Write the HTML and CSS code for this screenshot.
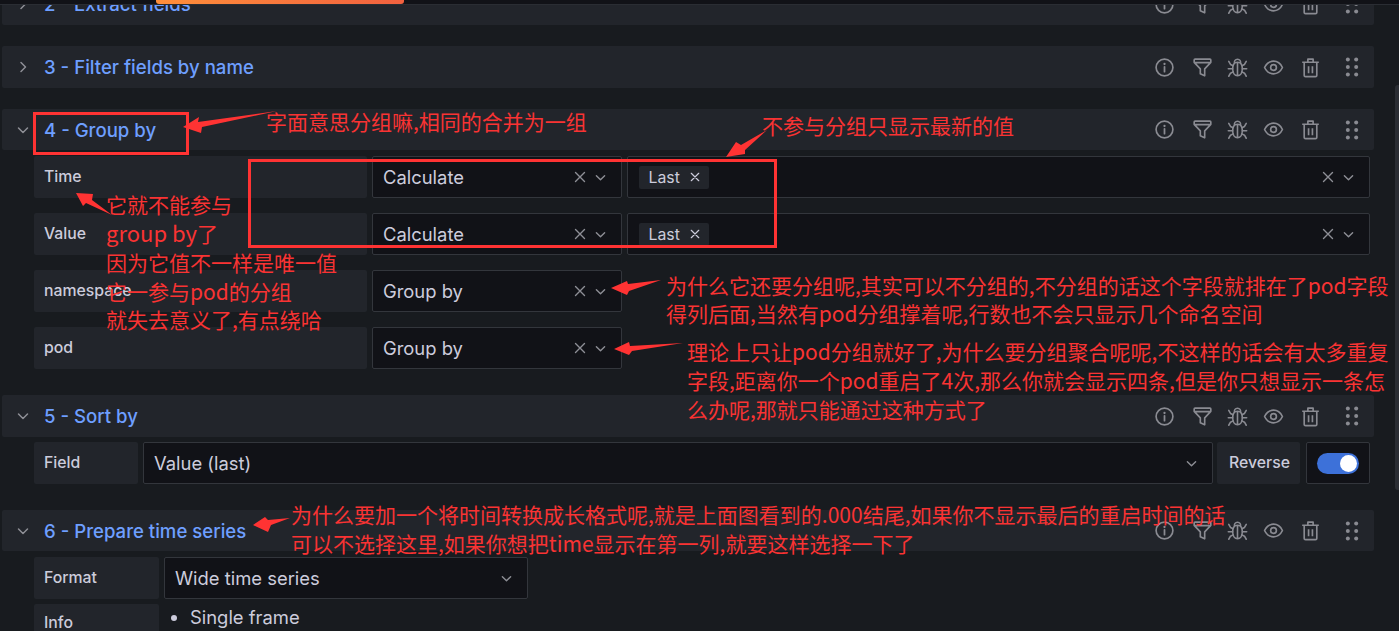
FILE: index.html
```html
<!DOCTYPE html>
<html lang="zh-CN">
<head>
<meta charset="utf-8">
<title>Transformations</title>
<link rel="stylesheet" href="styles.css">
</head>
<body>
<svg class="sprite" width="0" height="0" aria-hidden="true">
  <symbol id="i-info" viewBox="0 0 24 24"><circle cx="12" cy="12" r="9.6" fill="none" stroke="currentColor" stroke-width="1.9"/><circle cx="12" cy="8" r="1.3" fill="currentColor"/><path d="M12 11.2v5.6" stroke="currentColor" stroke-width="2" stroke-linecap="round"/></symbol>
  <symbol id="i-filter" viewBox="0 0 24 24"><path d="M3.5 2.500h17a1 1 0 0 1 1 1v2.600L14.500 13.500v8l-5-2.400v-5.600L2.500 6.100V3.500a1 1 0 0 1 1-1zM3 6.500h18" fill="none" stroke="currentColor" stroke-width="1.900" stroke-linejoin="round"/></symbol>
  <symbol id="i-bug" viewBox="0 0 24 24"><g fill="none" stroke="currentColor" stroke-width="1.800" stroke-linecap="round" stroke-linejoin="round"><path d="M12 6c3.300 0 5.500 3 5.500 7.500S15.300 21.500 12 21.500 6.500 18 6.500 13.500 8.700 6 12 6zM12 6.500v15M8.500 7.500C8 4.500 9.500 2.500 12 2.500s4 2 3.500 5"/><path d="M2 5l2 3.500 3 1.500M22 5l-2 3.500-3 1.500M1.500 13.500H6.500M22.500 13.500h-5M2 22l2-3.500 3-1.500M22 22l-2-3.500-3-1.500"/></g></symbol>
  <symbol id="i-eye" viewBox="0 0 24 24"><path d="M1.800 12C4 7.300 7.800 4.800 12 4.800s8 2.500 10.200 7.200c-2.200 4.700-6 7.200-10.200 7.200S4 16.700 1.800 12z" fill="none" stroke="currentColor" stroke-width="1.900" stroke-linejoin="round"/><circle cx="12" cy="12" r="3.300" fill="none" stroke="currentColor" stroke-width="1.900"/></symbol>
  <symbol id="i-trash" viewBox="0 0 24 24"><path d="M2.500 6h19M9 6V2.500h6V6M4.800 6v15a1.500 1.500 0 0 0 1.500 1.500h11.400a1.500 1.500 0 0 0 1.500-1.500V6M9.800 10.500v8M14.200 10.500v8" fill="none" stroke="currentColor" stroke-width="1.900" stroke-linejoin="round"/></symbol>
  <symbol id="i-drag" viewBox="0 0 24 24"><g fill="currentColor"><circle cx="7" cy="3" r="2.400"/><circle cx="17" cy="3" r="2.400"/><circle cx="7" cy="12" r="2.400"/><circle cx="17" cy="12" r="2.400"/><circle cx="7" cy="21" r="2.400"/><circle cx="17" cy="21" r="2.400"/></g></symbol>
  <symbol id="i-down" viewBox="0 0 12 12"><path d="M1.500 4l4.500 4.500L10.500 4" fill="none" stroke="currentColor" stroke-width="1.500" stroke-linecap="round" stroke-linejoin="round"/></symbol>
  <symbol id="i-right" viewBox="0 0 12 12"><path d="M4 1.500L8.500 6 4 10.500" fill="none" stroke="currentColor" stroke-width="1.500" stroke-linecap="round" stroke-linejoin="round"/></symbol>
  <symbol id="i-x" viewBox="0 0 12 12"><path d="M1.500 1.500l9 9M10.500 1.500l-9 9" fill="none" stroke="currentColor" stroke-width="1.400" stroke-linecap="round"/></symbol>
</svg>

<div class="page">
  <div class="topbar"><div class="progress"></div></div>
  <div class="scrollbar"></div>

  <main class="list">
    <section class="block block-first">
      <header class="head">
        <svg class="chev"><use href="#i-right"/></svg>
        <h2 class="title">2 - Extract fields</h2>
        <div class="actions">
          <svg class="ico"><use href="#i-info"/></svg><svg class="ico"><use href="#i-filter"/></svg><svg class="ico"><use href="#i-bug"/></svg><svg class="ico"><use href="#i-eye"/></svg><svg class="ico"><use href="#i-trash"/></svg><svg class="ico ico-drag"><use href="#i-drag"/></svg>
        </div>
      </header>
    </section>

    <section class="block">
      <header class="head">
        <svg class="chev"><use href="#i-right"/></svg>
        <h2 class="title">3 - Filter fields by name</h2>
        <div class="actions">
          <svg class="ico"><use href="#i-info"/></svg><svg class="ico"><use href="#i-filter"/></svg><svg class="ico"><use href="#i-bug"/></svg><svg class="ico"><use href="#i-eye"/></svg><svg class="ico"><use href="#i-trash"/></svg><svg class="ico ico-drag"><use href="#i-drag"/></svg>
        </div>
      </header>
    </section>

    <section class="block">
      <header class="head head-tight">
        <svg class="chev"><use href="#i-down"/></svg>
        <h2 class="title">4 - Group by</h2>
        <div class="actions">
          <svg class="ico"><use href="#i-info"/></svg><svg class="ico"><use href="#i-filter"/></svg><svg class="ico"><use href="#i-bug"/></svg><svg class="ico"><use href="#i-eye"/></svg><svg class="ico"><use href="#i-trash"/></svg><svg class="ico ico-drag"><use href="#i-drag"/></svg>
        </div>
      </header>
      <div class="body body-group">
        <div class="row">
          <div class="label label-field">Time</div>
          <div class="select select-mode"><span class="value">Calculate</span><svg class="x"><use href="#i-x"/></svg><svg class="caret"><use href="#i-down"/></svg></div>
          <div class="select select-calc"><span class="tag">Last<svg class="tag-x"><use href="#i-x"/></svg></span><svg class="x"><use href="#i-x"/></svg><svg class="caret"><use href="#i-down"/></svg></div>
        </div>
        <div class="row">
          <div class="label label-field">Value</div>
          <div class="select select-mode"><span class="value">Calculate</span><svg class="x"><use href="#i-x"/></svg><svg class="caret"><use href="#i-down"/></svg></div>
          <div class="select select-calc"><span class="tag">Last<svg class="tag-x"><use href="#i-x"/></svg></span><svg class="x"><use href="#i-x"/></svg><svg class="caret"><use href="#i-down"/></svg></div>
        </div>
        <div class="row">
          <div class="label label-field">namespace</div>
          <div class="select select-mode"><span class="value">Group by</span><svg class="x"><use href="#i-x"/></svg><svg class="caret"><use href="#i-down"/></svg></div>
        </div>
        <div class="row">
          <div class="label label-field">pod</div>
          <div class="select select-mode"><span class="value">Group by</span><svg class="x"><use href="#i-x"/></svg><svg class="caret"><use href="#i-down"/></svg></div>
        </div>
      </div>
    </section>

    <section class="block">
      <header class="head">
        <svg class="chev"><use href="#i-down"/></svg>
        <h2 class="title">5 - Sort by</h2>
        <div class="actions">
          <svg class="ico"><use href="#i-info"/></svg><svg class="ico"><use href="#i-filter"/></svg><svg class="ico"><use href="#i-bug"/></svg><svg class="ico"><use href="#i-eye"/></svg><svg class="ico"><use href="#i-trash"/></svg><svg class="ico ico-drag"><use href="#i-drag"/></svg>
        </div>
      </header>
      <div class="body">
        <div class="row">
          <div class="label label-sort">Field</div>
          <div class="select select-grow"><span class="value">Value (last)</span><svg class="caret"><use href="#i-down"/></svg></div>
          <div class="label label-rev">Reverse</div>
          <div class="switch-box"><span class="switch"><span class="knob"></span></span></div>
        </div>
      </div>
    </section>

    <section class="block">
      <header class="head head-tight">
        <svg class="chev"><use href="#i-down"/></svg>
        <h2 class="title">6 - Prepare time series</h2>
        <div class="actions">
          <svg class="ico"><use href="#i-info"/></svg><svg class="ico"><use href="#i-filter"/></svg><svg class="ico"><use href="#i-bug"/></svg><svg class="ico"><use href="#i-eye"/></svg><svg class="ico"><use href="#i-trash"/></svg><svg class="ico ico-drag"><use href="#i-drag"/></svg>
        </div>
      </header>
      <div class="body body-prep">
        <div class="row">
          <div class="label label-prep">Format</div>
          <div class="select select-format"><span class="value">Wide time series</span><svg class="caret"><use href="#i-down"/></svg></div>
        </div>
        <div class="row">
          <div class="label label-prep label-info">Info</div>
          <ul class="info-list"><li>Single frame</li></ul>
        </div>
      </div>
    </section>
  </main>

  <svg class="ink" viewBox="0 0 1399 631" aria-hidden="true">
    <rect class="ink-box" x="34.500" y="113.500" width="153" height="40"/>
    <rect class="ink-box" x="249.500" y="160.500" width="526" height="86"/>
    <polygon class="ink-arrow" points="183,127 199,117 198,122 277,111 202,127 201,133"/>
    <polygon class="ink-arrow" points="726,157 736,142 741,145 767,130 745,150 745,154"/>
    <polygon class="ink-arrow" points="76,193 93,194 92,200 112,215 86,203 83,206"/>
    <polygon class="ink-arrow" points="611,288 627,281 628,284 661,280 629,291 627,295"/>
    <polygon class="ink-arrow" points="614,349 629,342 630,346 683,343 632,351 629,355"/>
    <polygon class="ink-arrow" points="253,525 265,517 268,520 290,518 271,525 268,532"/>
  </svg>

  <p class="note note-a">字面意思分组嘛,相同的合并为一组</p>
  <p class="note note-b">不参与分组只显示最新的值</p>
  <p class="note note-c">它就不能参与<br><span class="big">group by</span>了<br>因为它值不一样是唯一值<br>它一参与pod的分组<br>就失去意义了,有点绕哈</p>
  <p class="note note-d">为什么它还要分组呢,其实可以不分组的,不分组的话这个字段就排在了pod字段<br>得列后面,当然有pod分组撑着呢,行数也不会只显示几个命名空间</p>
  <p class="note note-e">理论上只让pod分组就好了,为什么要分组聚合呢呢,不这样的话会有太多重复<br>字段,距离你一个pod重启了4次,那么你就会显示四条,但是你只想显示一条怎<br>么办呢,那就只能通过这种方式了</p>
  <p class="note note-f">为什么要加一个将时间转换成长格式呢,就是上面图看到的.000结尾,如果你不显示最后的重启时间的话<br>可以不选择这里,如果你想把time显示在第一列,就要这样选择一下了</p>
</div>
</body>
</html>
```
FILE: styles.css
```css
* { box-sizing: border-box; }
html, body { margin: 0; height: 100%; background: #181b1f; }
body { font-family: Inter, "Liberation Sans", sans-serif; color: #ccccdc; overflow: hidden; }
.sprite { position: absolute; }

.page { position: relative; width: 1399px; height: 631px; overflow: hidden; }

.topbar { position: absolute; z-index: 2; left: 0; top: 0; width: 100%; height: 5px; background: #111217; border-bottom: 1px solid #2a2d33; }
.progress { margin-left: 156px; width: 248px; height: 4px; border-radius: 0 0 3px 3px; background: linear-gradient(90deg, #ff8f3a, #f2613f); }
.scrollbar { position: absolute; right: 0; top: 85px; width: 4px; height: 405px; border-radius: 3px 0 0 3px; background: #2b2e34; }

.list { padding: 0 25px 0 2px; margin-top: -17px; display: flex; flex-direction: column; gap: 21px; }
.head { height: 42px; display: flex; align-items: center; background: #22252b; border-radius: 2px; padding-left: 15px; }
.head-tight { height: 41px; margin-bottom: 1px; }
.chev { width: 12px; height: 12px; color: #8e8f96; flex: none; }
.title { margin: 0 0 0 15px; font-size: 18.600px; font-weight: 500; color: #6e9fff; line-height: 24px; }
.actions { margin-left: auto; display: flex; align-items: center; gap: 15px; padding-right: 12px; color: #8a8b92; }
.ico { width: 21px; height: 21px; flex: none; }
.ico:nth-child(2) { margin-left: 2px; }
.ico:nth-child(3) { margin-left: -1px; }
.ico:nth-child(5) { margin-left: 1px; }
.ico-drag { width: 20px; height: 20px; margin-left: 6px; }

.body { display: flex; flex-direction: column; gap: 15px; padding: 5px 4px 5px 32px; }
.body-prep { gap: 5px; }
.row { display: flex; gap: 5px; height: 42px; }
.label { background: #22252b; border-radius: 2px; display: flex; align-items: center; padding: 0 0 2px 10px; font-size: 15.800px; font-weight: 500; color: #ccccdc; flex: none; }
.label-field { width: 333px; }
.label-sort { width: 104px; }
.label-rev { width: 83px; padding-left: 12px; margin-left: -1px; }
.label-prep { width: 125px; }
.label-info { align-items: flex-start; padding-top: 9px; height: 42px; }

.select { background: #111217; border: 1px solid #33363c; border-radius: 2px; display: flex; align-items: center; padding: 0 15px 0 10px; font-size: 18.400px; color: #ccccdc; min-width: 0; }
.select-mode { width: 250px; flex: none; }
.select-calc { flex: 1; padding-left: 11px; }
.select-grow { flex: 1; }
.select-format { width: 364px; flex: none; }
.value { margin-right: auto; }
.x { width: 12px; height: 12px; color: #8e8f96; flex: none; margin-left: auto; }
.caret { width: 11px; height: 11px; color: #8e8f96; flex: none; margin-left: 9px; }
.select-grow .caret, .select-format .caret { margin-left: auto; }

.tag { display: inline-flex; align-items: center; height: 23px; width: 70px; padding-left: 9.500px; background: #22252b; border-radius: 2px; font-size: 15.800px; color: #ccccdc; }
.tag-x { width: 10px; height: 10px; margin-left: 10px; color: #ccccdc; }

.switch-box { width: 64px; margin-left: 1px; background: #111217; border: 1px solid #33363c; border-radius: 2px; display: flex; align-items: center; justify-content: center; }
.switch { position: relative; display: block; width: 42px; height: 21px; border-radius: 11px; background: #3d71d9; }
.knob { position: absolute; right: 2px; top: 2px; width: 17px; height: 17px; border-radius: 50%; background: #fff; }

.info-list { margin: 0; padding: 0 0 0 26px; font-size: 18.400px; line-height: 27px; color: #ccccdc; }

.ink { position: absolute; left: 0; top: 0; width: 1399px; height: 631px; z-index: 3; pointer-events: none; }
.ink-box { fill: none; stroke: #ff3333; stroke-width: 3; }
.ink-arrow { fill: #ff3333; }

.note { position: absolute; z-index: 4; margin: 0; color: #f93333; font-family: "Noto Sans CJK SC", "Liberation Sans", sans-serif; font-size: 21px; line-height: 28.700px; white-space: nowrap; }
.big { font-size: 22px; }
.note-a { left: 266px; top: 107px; }
.note-b { left: 762px; top: 111px; }
.note-c { left: 106px; top: 189.500px; }
.note-d { left: 666px; top: 271px; line-height: 28px; }
.note-e { left: 687px; top: 336.500px; line-height: 29px; }
.note-f { left: 291px; top: 500px; line-height: 28.500px; }
```
